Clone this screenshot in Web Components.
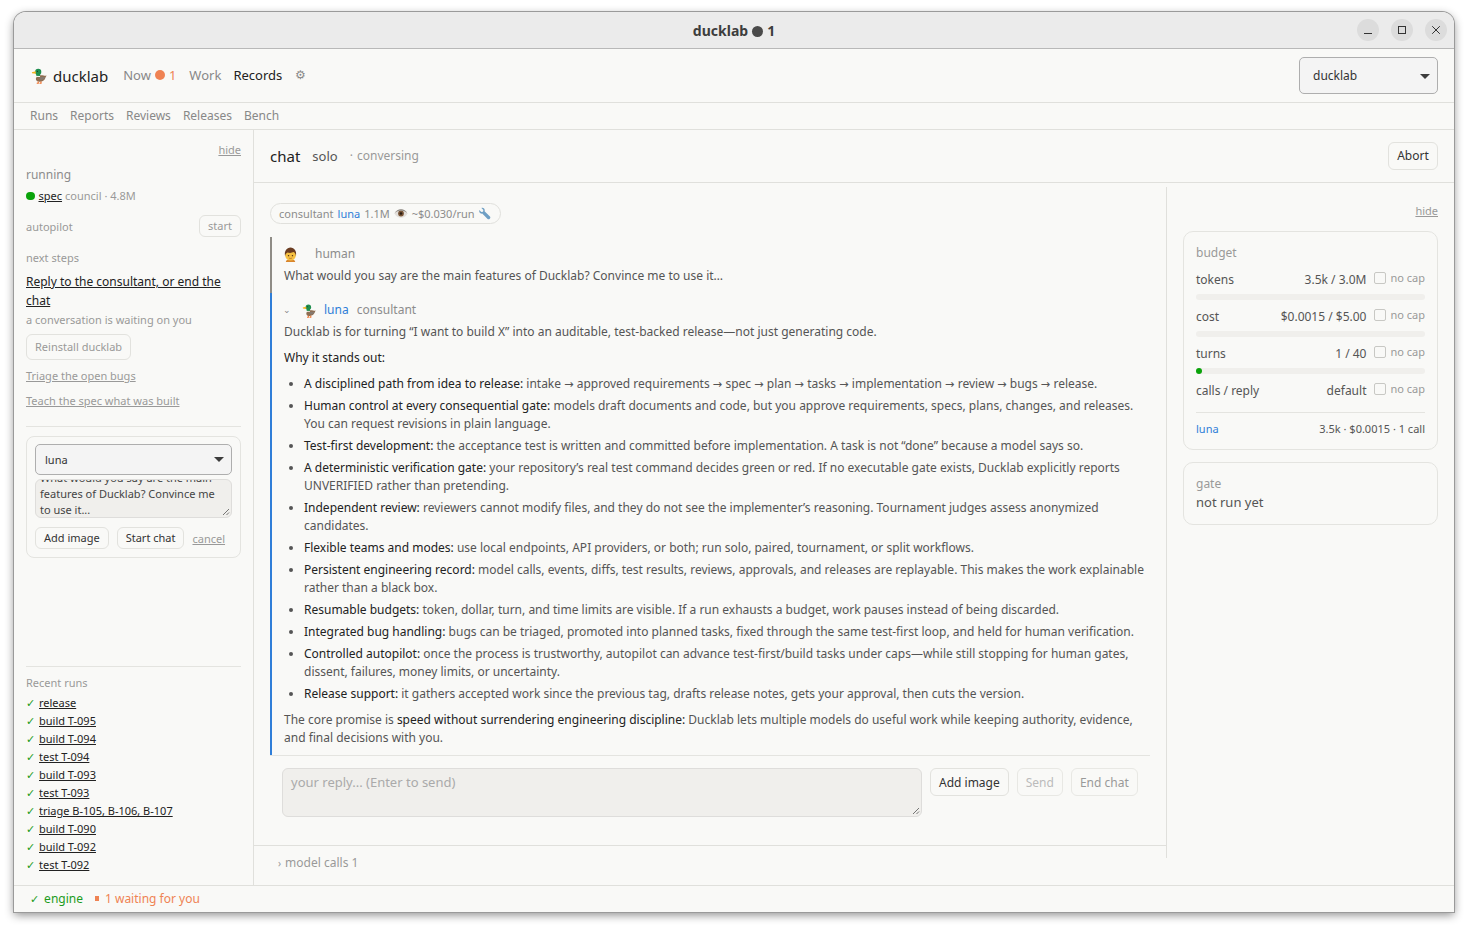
<!DOCTYPE html>
<html><head><meta charset="utf-8"><title>ducklab</title>
<style>
html,body{margin:0;height:100%;background:#fff;}
body{padding:12px 14px 17px;box-sizing:border-box;height:929px;overflow:hidden;font-family:"Noto Sans",sans-serif;font-size:12px;color:#555;}
</style></head><body>
<app-window>
  <title-bar></title-bar>
  <app-header></app-header>
  <sub-nav></sub-nav>
  <div style="display:flex;flex:1;min-height:0">
    <left-rail></left-rail>
    <chat-view></chat-view>
  </div>
  <status-bar></status-bar>
</app-window>
<script>
const duck=(s)=>`<svg viewBox="0 0 16 16" width="${s}" height="${s}" style="display:block;flex:none"><path d="M5.800 9c-1 .7-1.500 2-1 3.200.6 1.300 2 1.700 3.600 1.600 2.400-.1 4.300-1.200 5-3.300.4-1 .8-1.900 1.300-2.600-1 .2-2 .4-3 .2-1.400-.4-3.500-.7-5.900.9z" fill="#8f6e52"/><path d="M8.300 9.600c1.600-.5 3.200-.3 4.800 0 .2 0 .1.300 0 .6-.6 1.600-2 2.300-3.500 2.100-1.300-.2-1.900-1.700-1.300-2.700z" fill="#85796f"/><path d="M5 8.300h3.500v1.100H5z" fill="#f1efe8"/><circle cx="6.800" cy="4.600" r="2.900" fill="#1f8f4e"/><rect x="5" y="5.400" width="3.500" height="3" fill="#1f8f4e"/><path d="M4.400 4 .8 4.900l.2 1 3.600.4z" fill="#f2b21c"/><circle cx="6" cy="4" r=".5" fill="#111"/><path d="M6.800 13.600v1.700H5.400M9.400 13.600v1.700H8" fill="none" stroke="#f0702b" stroke-width="1.100"/></svg>`;
const PERSON=`<svg viewBox="0 0 16 16" width="15" height="15" style="display:block;flex:none"><path d="M3 16c0-2 2-3 5-3s5 1 5 3z" fill="#d9862c"/><circle cx="8" cy="8.600" r="5.800" fill="#f6c142"/><path d="M2.200 9.500C1 4.500 4 .6 8 .6s7 3.900 5.800 8.900c-.3-2-1.200-3.500-2.500-4.100-1.900 1-4.400 1.100-6.400.5-1.300.6-2.400 1.800-2.700 3.600z" fill="#6b3d21"/><circle cx="5.900" cy="9.200" r=".75" fill="#4a2a12"/><circle cx="10.100" cy="9.200" r=".75" fill="#4a2a12"/><path d="M6.300 11.700c1.100.7 2.300.7 3.400 0" stroke="#a8582a" stroke-width=".7" fill="none"/></svg>`;
const EYE=`<svg viewBox="0 0 16 12" width="14" height="11" style="display:block;flex:none"><path d="M.5 6C2.500 2.500 5 1.200 8 1.200S13.500 2.500 15.500 6c-2 3.500-4.500 4.800-7.500 4.800S2.500 9.500.5 6z" fill="#e2dfdb"/><circle cx="8" cy="6" r="3.300" fill="#7a5638"/><circle cx="8" cy="6" r="1.500" fill="#2a1c12"/><path d="M.5 6C2.500 2.500 5 1.200 8 1.200S13.500 2.500 15.500 6C13 3.500 11 2.700 8 2.700S3 3.500.5 6z" fill="#8c8782"/></svg>`;
const WRENCH=`<svg viewBox="0 0 16 16" width="13" height="13" style="display:block;flex:none;margin-left:-1px"><path d="M1.600 3.800 4 6.200l2.200-.4.400-2.200L4.200 1.200C6.300.4 8.300 1.800 8.300 4c0 .5-.1.900-.2 1.200l6.600 6.600c.7.700.7 1.700 0 2.400l-.5.500c-.7.700-1.700.7-2.400 0L5.200 8.100C2.900 8.900.8 6.300 1.600 3.800z" fill="#6f9fc4"/></svg>`;
const AR=`<span class="ar">→</span>`;
const LINKCSS=`a{color:inherit;text-decoration:underline;text-underline-offset:1px;cursor:pointer}`;
function el(tag,html,css){
  customElements.define(tag,class extends HTMLElement{
    constructor(){super();this.attachShadow({mode:'open'}).innerHTML=`<style>${LINKCSS}${css}</style>${html}`;}
  });
}
el('app-window',`<slot></slot>`,`:host{display:flex;flex-direction:column;height:900px;box-sizing:border-box;background:#f9f9f7;border-radius:12px 12px 0 0;box-shadow:0 0 0 1px #9a9a9a,0 3px 10px rgba(0,0,0,.45);overflow:hidden;}`);
el('title-bar',`<div class="t"><b>ducklab</b><i></i><b>1</b></div>
<div class="ctl"><span><svg width="10" height="10" viewBox="0 0 10 10"><path d="M1 8.500h8" stroke="#333" stroke-width="1"/></svg></span><span><svg width="10" height="10" viewBox="0 0 10 10"><rect x="1.500" y="1.500" width="7" height="7" fill="none" stroke="#333"/></svg></span><span><svg width="10" height="10" viewBox="0 0 10 10"><path d="M1.200 1.200l7.600 7.600M8.800 1.200l-7.600 7.600" stroke="#333" stroke-width="1"/></svg></span></div>`,
`:host{display:flex;align-items:center;justify-content:center;height:36px;flex:none;background:#ebebeb;border-bottom:1px solid #b8b8b8;position:relative;font-size:14px;color:#3d3d3d}
.t{display:flex;align-items:center;gap:4px}.t b{font-weight:700}.t i{width:11px;height:11px;border-radius:50%;background:#4a4a4a;margin-top:2px}
.ctl{position:absolute;right:7px;top:7px;display:flex;gap:12px}.ctl span{width:22px;height:22px;border-radius:50%;background:#dcdcdc;display:flex;align-items:center;justify-content:center}`);
el('app-header',`<div class="brand">${duck(17)}<span>ducklab</span></div>
<nav><span class="g">Now</span><i></i><span class="o">1</span><span class="g w">Work</span><span class="k r">Records</span><span class="gear w">⚙</span></nav>
<div class="sel">ducklab<u></u></div>`,
`:host{display:flex;align-items:center;height:53px;flex:none;padding:0 16px 0 17px;border-bottom:1px solid #e0e0dc;box-sizing:content-box}
.brand{display:flex;align-items:center;gap:5px;font-size:15px;color:#222}
nav{display:flex;align-items:center;margin-left:15px;margin-top:-2px;font-size:13px}.g{color:#888}.k{color:#222}.o{color:#ef8354;margin-left:4px}
nav i{width:10px;height:10px;border-radius:50%;background:#ef8354;margin-left:4px}.w{margin-left:13px}.r{margin-left:12px}.gear{color:#8a8a8a;font-size:12px}
.sel{margin-left:auto;width:139px;height:37px;box-sizing:border-box;border:1px solid #aeaeae;border-radius:5px;background:#f4f4f4;display:flex;align-items:center;padding-left:13px;font-size:12px;color:#333;position:relative}
.sel u{position:absolute;right:7px;top:16px;border:5px solid transparent;border-top:5px solid #3c3c3c;border-bottom:0}`);
el('sub-nav',`<span>Runs</span><span>Reports</span><span>Reviews</span><span>Releases</span><span>Bench</span>`,
`:host{display:flex;align-items:center;gap:12px;height:27px;flex:none;padding:0 0 2px 16px;box-sizing:border-box;border-bottom:1px solid #e0e0dc;font-size:12px;color:#888}`);
el('left-rail',`<div class="hide"><a>hide</a></div>
<div class="h" style="margin-top:9px">running</div>
<div class="run"><i></i><a class="d">spec</a><span>council · 4.8M</span></div>
<div class="auto"><span>autopilot</span><button class="ghost">start</button></div>
<div class="lbl" style="margin-top:12px">next steps</div>
<a class="main">Reply to the consultant, or end the chat</a>
<div class="lbl" style="margin-top:1px">a conversation is waiting on you</div>
<button class="ghost re">Reinstall ducklab</button>
<div class="lk" style="margin-top:7px"><a>Triage the open bugs</a></div>
<div class="lk" style="margin-top:7px"><a>Teach the spec what was built</a></div>
<div class="sep">
<div class="form">
  <div class="sel">luna<u></u></div>
  <div class="ta"><div class="tt">What would you say are the main features of Ducklab? Convince me to use it...</div><svg class="grip" width="8" height="8" viewBox="0 0 8 8"><path d="M1 7l6-6M4.500 7l2.500-2.500" stroke="#555" stroke-width=".8"/></svg></div>
  <div class="row"><button>Add image</button><button>Start chat</button><a>cancel</a></div>
</div></div>
<div class="spacer"></div>
<div class="recent">
  <div class="lbl">Recent runs</div>
  <ul>${['release','build T-095','build T-094','test T-094','build T-093','test T-093','triage B-105, B-106, B-107','build T-090','build T-092','test T-092'].map(t=>`<li><s>✓</s><a>${t}</a></li>`).join('')}</ul>
</div>`,
`:host{display:flex;flex-direction:column;width:215px;flex:none;box-sizing:content-box;padding:12px 12px 0;border-right:1px solid #e0e0dc;font-size:11px;color:#999;min-height:0}
.hide{text-align:right;line-height:15px;color:#999}
.h{font-size:12px;color:#8c8c8c;line-height:18px}
.run{display:flex;align-items:center;margin-top:3px;line-height:18px;font-size:11px}.run i{width:8.500px;height:8.500px;background:#0aa30a;border-radius:50%;margin-right:4px}.run .d{color:#222;margin-right:3px}
.auto{display:flex;justify-content:space-between;align-items:center;margin-top:10px}
button{font:inherit;font-size:11px;background:none;border:1px solid #e2e2de;border-radius:6px;color:#333;height:22px;padding:0 8px;line-height:18px;white-space:nowrap}
button.ghost{color:#999}
.lbl{line-height:18px;color:#999}
.main{display:block;margin-top:5px;font-size:12px;line-height:19px;color:#222}
.re{align-self:flex-start;height:26px;margin-top:5px}
.lk{line-height:18px;color:#999}
.sep{border-top:1px solid #e4e4e0;margin-top:16px;padding-top:9px}
.form{border:1px solid #e4e4e0;border-radius:8px;padding:7px 8px 8px}
.sel{height:31px;box-sizing:border-box;border:1px solid #aeaeae;border-radius:5px;background:#f4f4f4;display:flex;align-items:center;padding-left:9px;color:#333;position:relative}
.sel u{position:absolute;right:7px;top:12px;border:5px solid transparent;border-top:5px solid #3c3c3c;border-bottom:0}
.ta{height:39px;box-sizing:border-box;margin-top:4px;background:#f0efec;border:1px solid #dedddb;border-radius:6px;overflow:hidden;display:flex;flex-direction:column;justify-content:flex-end;padding:0 4px 0;line-height:16px;color:#444;position:relative}
.tt{margin-bottom:-1px}
.grip{position:absolute;right:1px;bottom:1px}
.row{display:flex;align-items:center;gap:8px;margin-top:9px}.row a{color:#999}
.spacer{flex:1}
.recent{border-top:1px solid #e4e4e0;padding:7px 0 11px}
ul{list-style:none;margin:2px 0 0;padding:0}li{height:18px;line-height:18px;color:#222;display:flex}li s{text-decoration:none;color:#1c9c1c;width:13px;font-size:11px}`);
el('chat-view',`<header><b>chat</b><span class="solo">solo</span><span class="st">· <span style="margin-left:1px">conversing</span></span><button>Abort</button></header>
<div class="body"><chat-main></chat-main><budget-side></budget-side></div>`,
`:host{display:flex;flex-direction:column;flex:1;min-width:0}
header{height:52px;flex:none;display:flex;align-items:center;padding:0 16px;border-bottom:1px solid #e0e0dc;box-sizing:content-box}
b{font-weight:400;font-size:15px;color:#222}.solo{font-size:13px;color:#555;margin-left:12px}.st{font-size:12px;color:#999;margin-left:12px;margin-top:-2px}
button{margin-left:auto;font:inherit;font-size:12px;color:#333;background:none;border:1px solid #e2e2de;border-radius:6px;height:28px;width:50px;padding:0 0 2px}
.body{flex:1;display:flex;min-height:0}`);
el('chat-main',`<div class="scroll">
<div class="chip">consultant <span class="bl">luna</span> 1.1M ${EYE} ~$0.030/run ${WRENCH}</div>
<chat-msg class="m"></chat-msg>
</div>
<div class="comp"><div class="ta">your reply... (Enter to send)<svg class="grip" width="8" height="8" viewBox="0 0 8 8"><path d="M1 7l6-6M4.500 7l2.500-2.500" stroke="#555" stroke-width=".8"/></svg></div><button class="k">Add image</button><button>Send</button><button class="g">End chat</button></div>
<div class="calls"><span class="c">›</span> model calls 1</div>`,
`:host{display:flex;flex-direction:column;width:912px;flex:none;min-height:0;border-right:1px solid #e0e0dc;margin:4px 0 27px}
.scroll{flex:1;min-height:0;padding:16px 16px 0}
.chip{display:inline-flex;align-items:center;gap:4px;height:21px;box-sizing:border-box;padding:0 9px 0 8px;border:1px solid #e0e0dc;border-radius:11px;font-size:11px;color:#8c8c8c;white-space:nowrap}
.bl{color:#2f7ed8}
.comp{height:89px;flex:none;box-sizing:border-box;display:flex;align-items:flex-start;gap:8px;padding:12px 28px 0}
.ta{width:640px;height:49px;flex:none;box-sizing:border-box;background:#f0efec;border:1px solid #dedddb;border-radius:6px;padding:4px 8px;font-size:13px;line-height:18px;color:#aaa;position:relative}
.grip{position:absolute;right:1px;bottom:1px}
button{font:inherit;font-size:12px;background:none;border:1px solid #e8e8e4;border-radius:6px;height:28px;padding:0 8px;color:#bbb;white-space:nowrap;flex:none}
button.k{color:#333;border-color:#e2e2de}button.g{color:#999}
.calls{height:34px;margin-bottom:-21px;margin-right:-1px;flex:none;display:flex;align-items:center;gap:4px;padding:0 24px;border-top:1px solid #e0e0dc;font-size:12px;color:#999;box-sizing:border-box}.c{font-size:10px}`);
</script>
<script>
el('chat-msg',`<section class="hm"><div class="who">${PERSON}<span class="n">human</span></div><p>What would you say are the main features of Ducklab? Convince me to use it…</p></section>
<section class="lu"><div class="who"><span class="ch">⌄</span>${duck(15)}<span class="bl">luna</span><span class="r">consultant</span></div>
<p>Ducklab is for turning “I want to build X” into an auditable, test-backed release—not just generating code.</p>
<p class="why">Why it stands out:</p>
<ul>
<li><b>A disciplined path from idea to release:</b> intake ${AR} approved requirements ${AR} spec ${AR} plan ${AR} tasks ${AR} implementation ${AR} review ${AR} bugs ${AR} release.</li>
<li><b>Human control at every consequential gate:</b> models draft documents and code, but you approve requirements, specs, plans, changes, and releases. You can request revisions in plain language.</li>
<li><b>Test-first development:</b> the acceptance test is written and committed before implementation. A task is not “done” because a model says so.</li>
<li><b>A deterministic verification gate:</b> your repository’s real test command decides green or red. If no executable gate exists, Ducklab explicitly reports UNVERIFIED rather than pretending.</li>
<li><b>Independent review:</b> reviewers cannot modify files, and they do not see the implementer’s reasoning. Tournament judges assess anonymized candidates.</li>
<li><b>Flexible teams and modes:</b> use local endpoints, API providers, or both; run solo, paired, tournament, or split workflows.</li>
<li><b>Persistent engineering record:</b> model calls, events, diffs, test results, reviews, approvals, and releases are replayable. This makes the work explainable rather than a black box.</li>
<li><b>Resumable budgets:</b> token, dollar, turn, and time limits are visible. If a run exhausts a budget, work pauses instead of being discarded.</li>
<li><b>Integrated bug handling:</b> bugs can be triaged, promoted into planned tasks, fixed through the same test-first loop, and held for human verification.</li>
<li><b>Controlled autopilot:</b> once the process is trustworthy, autopilot can advance test-first/build tasks under caps—while still stopping for human gates, dissent, failures, money limits, or uncertainty.</li>
<li><b>Release support:</b> it gathers accepted work since the previous tag, drafts release notes, gets your approval, then cuts the version.</li>
</ul>
<p class="end">The core promise is <b>speed without surrendering engineering discipline:</b> Ducklab lets multiple models do useful work while keeping authority, evidence, and final decisions with you.</p></section>`,
`:host{display:block;margin-top:13px;font-size:12px;line-height:18px;color:#555;border-bottom:1px solid #e4e4e0}
section{border-left:2px solid #8f8c86;padding-left:12px;padding-right:4px}
.hm{height:56px;padding-top:8px;box-sizing:border-box}.lu{border-left-color:#2f7ed8;padding-bottom:8px;padding-top:8px}
.who{display:flex;align-items:center;height:18px}.hm .who svg{margin-left:-1px}.n{margin-left:17px;color:#8c8c8c}.r{margin-left:8px;color:#8c8c8c}.bl{color:#2f7ed8;margin-left:7px}
.ch{width:18px;font-size:9px;color:#888;line-height:1;margin-left:-1px;margin-right:1px;margin-top:-1px}
p{margin:4px 0 0}.why{margin-top:8px;color:#222}
ul{margin:8px 0 0;padding:0 0 0 20px}li{margin-bottom:4px}li::marker{color:#555;font-size:12px}
b{font-weight:400;color:#222}.end{margin-top:8px}
.ar{font-family:"DejaVu Sans",sans-serif;font-size:11.300px;line-height:1}`);
el('budget-side',`<div class="hide"><a>hide</a></div>
<div class="card"><div class="t">budget</div>
<div class="r"><span class="a">tokens</span><span class="v">3.5k / 3.0M</span><i></i><span class="n">no cap</span></div><div class="bar"></div>
<div class="r"><span class="a">cost</span><span class="v">$0.0015 / $5.00</span><i></i><span class="n">no cap</span></div><div class="bar"></div>
<div class="r"><span class="a">turns</span><span class="v">1 / 40</span><i></i><span class="n">no cap</span></div><div class="bar on"></div>
<div class="r"><span class="a">calls / reply</span><span class="v">default</span><i></i><span class="n">no cap</span></div>
<div class="foot"><span class="bl">luna</span><span>3.5k · $0.0015 · 1 call</span></div></div>
<div class="card g"><div class="t">gate</div><div class="nr">not run yet</div></div>`,
`:host{display:block;flex:1;padding:20px 16px 0 16px;min-width:0;font-size:12px;box-sizing:border-box}
.hide{text-align:right;font-size:11px;line-height:15px;color:#999}
.card{border:1px solid #e4e4e0;border-radius:10px;padding:12px 12px 12px;margin-top:13px;color:#555}.g{margin-top:12px;height:63px;box-sizing:border-box;padding-top:12px}
.t{color:#999;line-height:18px}
.r{display:flex;align-items:center;height:18px;margin-top:9px;line-height:18px}.a{flex:1}
i{width:10px;height:10px;border:1px solid #c8c8c4;border-radius:2px;margin-left:8px;background:#f9f9f7;margin-top:-5px}
.n{font-size:11px;color:#999;margin-left:4px;margin-top:-5px}
.bar{height:6px;border-radius:3px;background:#f0efec;margin-top:5px;position:relative;margin-bottom:-1px}
.on::before{content:"";position:absolute;left:0;top:0;width:6px;height:6px;border-radius:50%;background:#0aa30a}
.foot{display:flex;justify-content:space-between;font-size:11px;line-height:16px;border-top:1px solid #e4e4e0;margin-top:12px;padding-top:8px}.bl{color:#2f7ed8}
.nr{font-size:13px;line-height:20px;margin-top:-1px}`);
el('status-bar',`<span class="ok"><s>✓</s> engine</span><span class="w"><i></i>1 waiting for you</span>`,
`:host{display:flex;align-items:center;height:27px;flex:none;box-sizing:border-box;padding:0 0 2px 16px;border-top:1px solid #e0e0dc;font-size:12px}
.ok{color:#1c9c1c}.ok s{text-decoration:none;font-size:11px;margin-right:2px}.w{color:#ef8354;margin-left:12px;display:flex;align-items:center}i{width:4px;height:5px;background:#ef8354;margin-right:6px}`);
</script>
</body></html>
